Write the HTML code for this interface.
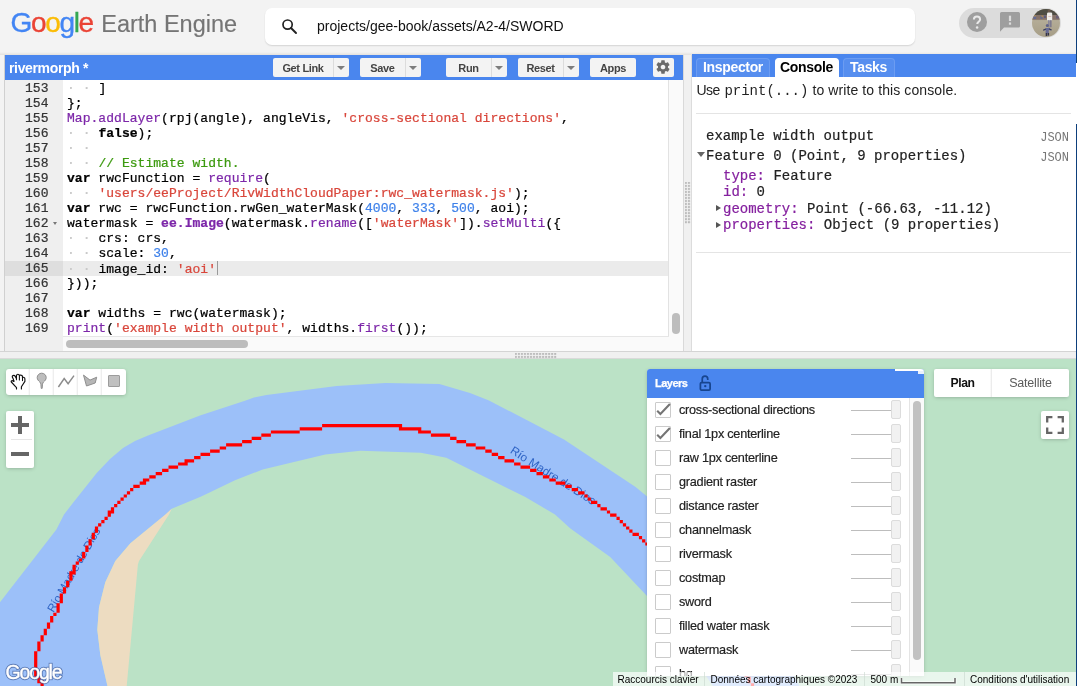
<!DOCTYPE html>
<html>
<head>
<meta charset="utf-8">
<title>Earth Engine Code Editor</title>
<style>
html,body{margin:0;padding:0;}
body{width:1077px;height:686px;overflow:hidden;position:relative;background:#f1f1f1;font-family:"Liberation Sans",sans-serif;font-size:13px;color:#212121;}
.abs{position:absolute;}
/* ---------- header ---------- */
#hdr{left:0;top:0;width:1077px;height:45px;background:#f3f3f3;}
#hdrline{display:none;}
#hdrgap{left:0;top:45px;width:1077px;height:11px;background:linear-gradient(#f3f3f3 0,#f3f3f3 7px,#e6e4e1 9.500px);}
#logo{left:10.500px;top:7px;height:32px;line-height:32px;font-size:28px;white-space:nowrap;letter-spacing:-1.350px;-webkit-text-stroke:0.350px;}
#logo .ee{color:#757575;font-size:23.500px;letter-spacing:0;margin-left:8.500px;-webkit-text-stroke:0.150px;}
#search{left:265px;top:8px;width:650px;height:37px;background:#fff;border-radius:7px;box-shadow:0 1px 1.500px rgba(0,0,0,.13);}
#search span{position:absolute;left:52px;top:0;line-height:36px;font-size:14px;color:#111;}
#pill{left:959px;top:8px;width:102px;height:30px;border-radius:15px;background:#dcdcdc;}
/* ---------- editor ---------- */
#lstrip{left:0;top:55px;width:5px;height:296px;background:#f3f3f3;border-right:1px solid #d0d0d0;box-sizing:border-box;}
#edbar{left:5px;top:55px;width:678px;height:25px;background:#4a86ee;}
#edbar .title{position:absolute;left:4px;top:0;line-height:26px;font-size:14px;font-weight:bold;color:#fff;letter-spacing:-0.35px;}
.btn{position:absolute;top:3px;height:19px;letter-spacing:-0.35px;background:#f3f3f3;border-radius:2px;color:#444;font-weight:bold;font-size:11px;line-height:20.300px;text-align:center;box-sizing:border-box;}
.btn .dd{position:absolute;right:0;top:0;width:16px;height:100%;border-left:1px solid #dcdcdc;box-sizing:border-box;}
.btn .dd:after{content:"";position:absolute;left:3px;top:7.5px;border:4.2px solid transparent;border-top:4.4px solid #7d7d7d;border-bottom:none;}
.btn .lb{position:absolute;left:0;top:0;bottom:0;}
#gutter{left:5px;top:80px;width:58px;height:271px;background:#efefef;}
#code{left:63px;top:80px;width:605px;height:256px;background:#fff;overflow:hidden;}
.ln,.cl{position:absolute;margin-top:0.7px;letter-spacing:0.04px;-webkit-text-stroke:0.22px;font-family:"Liberation Mono",monospace;font-size:13px;line-height:15px;height:15px;white-space:pre;}
.ln{left:0;width:43.5px;text-align:right;color:#333;}
.cl{left:4px;color:#000;}
.k{font-weight:bold;}
.p{color:#7d27a9;}
.s{color:#d9463b;}
.n{color:#3f82ea;}
.c{color:#3c9a0f;}
.d{color:#c8c8c8;}
#hl{left:5px;top:260.5px;width:664px;height:15px;background:#e8e8e8;}
#hl2{left:63px;top:260.5px;width:606px;height:15px;background:#ececec;}
#vsb{left:667.800px;top:80px;width:15.200px;height:271px;background:#fafafa;border-left:1px solid #e2e2e2;box-sizing:border-box;}
#vth{left:672px;top:313px;width:8px;height:21px;border-radius:4px;background:#bdbdbd;}
#hsb{left:63px;top:336px;width:606px;height:15px;background:#fafafa;border-top:1px solid #e6e6e6;box-sizing:border-box;}
#hth{left:66px;top:340px;width:182px;height:8px;border-radius:4px;background:#bdbdbd;}
#vsplit{left:683px;top:55px;width:9px;height:296px;background:#f0f0f0;border-left:1px solid #d9d9d9;border-right:1px solid #dcdcdc;box-sizing:border-box;}
.dots{position:absolute;background-image:radial-gradient(circle at 1px 1px,#b2b2b2 0.750px,rgba(178,178,178,0) 1.250px);background-size:3.020px 3.020px;}
/* ---------- right panel ---------- */
#rbar{left:692px;top:54px;width:385px;height:23px;background:#4a86ee;}
#rpanel{left:692px;top:77px;width:385px;height:273.5px;background:#fff;}
.tab{position:absolute;top:4px;height:19px;line-height:17px;font-size:14px;font-weight:bold;color:#fff;border:1px solid rgba(255,255,255,.13);border-bottom:none;border-radius:4px 4px 0 0;background:rgba(255,255,255,.07);text-align:center;box-sizing:border-box;letter-spacing:-0.35px;}
.tab.on{background:#fff;color:#000;border-color:#fff;}
.mono{font-family:"Liberation Mono",monospace;}
.cons{position:absolute;-webkit-text-stroke:0.2px;font-family:"Liberation Mono",monospace;font-size:14px;line-height:17px;white-space:pre;color:#222;}
.cons .p{color:#85219f;}
.json{position:absolute;font-family:"Liberation Mono",monospace;font-size:12px;color:#777;right:8px;}
.hr{position:absolute;height:1px;background:#e4e4e4;}
#hsplit{left:0;top:350.500px;width:1077px;height:8px;background:#f0f0f0;border-top:1px solid #d4d4d4;border-bottom:1px solid #dadada;box-sizing:border-box;}
/* ---------- map ---------- */
#map{left:0;top:358.5px;width:1077px;height:327.5px;background:#bbe2c6;overflow:hidden;}
</style>
</head>
<body>
<div id="root" style="position:absolute;left:0;top:0;width:1077px;height:686px;overflow:hidden;will-change:transform">
<!-- ================= HEADER ================= -->
<div id="hdr" class="abs"></div>
<div id="hdrline" class="abs"></div>
<div id="hdrgap" class="abs"></div>
<div id="logo" class="abs"><span style="color:#4285f4">G</span><span style="color:#ea4335">o</span><span style="color:#fbbc05">o</span><span style="color:#4285f4">g</span><span style="color:#34a853">l</span><span style="color:#ea4335">e</span><span class="ee">Earth Engine</span></div>
<div id="search" class="abs">
  <svg class="abs" style="left:16px;top:10px" width="17" height="17" viewBox="0 0 17 17"><circle cx="6.6" cy="6.6" r="4.6" fill="none" stroke="#222" stroke-width="1.7"/><path d="M10 10l5 5" stroke="#222" stroke-width="1.9" stroke-linecap="round"/></svg>
  <span>projects/gee-book/assets/A2-4/SWORD</span>
</div>
<div id="pill" class="abs"></div>
<!-- help -->
<svg class="abs" style="left:967px;top:12px" width="20" height="20" viewBox="0 0 20 20"><circle cx="10" cy="10" r="10" fill="#9e9e9e"/><path d="M6.9 7.6c0-1.8 1.3-3 3.1-3s3.1 1.1 3.1 2.8c0 2.2-2.9 2.5-2.9 4.7" fill="none" stroke="#e9e9e9" stroke-width="2"/><circle cx="10.1" cy="15.400" r="1.250" fill="#e9e9e9"/></svg>
<!-- feedback -->
<svg class="abs" style="left:1000px;top:12px" width="20" height="20.500" viewBox="0 0 20 20" preserveAspectRatio="none"><path d="M1.6 0h16.8c.9 0 1.6.7 1.6 1.600v12c0 .9-.7 1.600-1.600 1.600H4l-4 4V1.600C0 .7.7 0 1.600 0z" fill="#9e9e9e"/><rect x="8.900" y="3.600" width="2.200" height="5.200" fill="#dcdcdc"/><rect x="8.900" y="10.200" width="2.200" height="2.200" fill="#dcdcdc"/></svg>
<!-- avatar -->
<svg class="abs" style="left:1032px;top:8.800px" width="28" height="28" viewBox="0 0 28 28">
  <defs><clipPath id="av"><circle cx="14" cy="14" r="14"/></clipPath>
  <linearGradient id="avg" x1="0" y1="0" x2="0" y2="1"><stop offset="0" stop-color="#9a917b"/><stop offset=".45" stop-color="#b3ab96"/><stop offset="1" stop-color="#a59c84"/></linearGradient></defs>
  <g clip-path="url(#av)"><g>
    <rect x="-2" y="-2" width="32" height="32" fill="url(#avg)"/>
    <rect x="-2" y="-2" width="32" height="8.500" fill="#4f4d44"/>
    <rect x="-2" y="6" width="32" height="4.800" fill="#86736a"/>
    <rect x="1.500" y="7" width="2.600" height="3" fill="#5a689f" opacity=".8"/><rect x="2.200" y="6.400" width="1.600" height="1.200" fill="#c7983d" opacity=".75"/>
    <rect x="8.300" y="7" width="2.200" height="3" fill="#5d668f" opacity=".8"/><rect x="9.400" y="6.600" width="1.600" height="1.200" fill="#c7983d" opacity=".75"/>
    <rect x="12" y="6.500" width="2" height="2.500" fill="#5d5a7a"/>
    <rect x="24" y="6.500" width="3" height="3" fill="#6a5f76"/>
    <circle cx="17.100" cy="2" r="1.500" fill="#6b5a50"/>
    <rect x="15" y="3.600" width="5.200" height="7.800" rx="1.200" fill="#efedea"/>
    <rect x="16.300" y="7" width="3" height=".8" fill="#d9b5ae"/>
    <rect x="16" y="11.200" width="1.700" height="7.300" fill="#8a8699"/><rect x="18" y="11.200" width="1.600" height="7" fill="#7d7a8d"/>
    <circle cx="15.300" cy="16.600" r="1.500" fill="#5d6086"/>
    <path d="M11.400 20.800l2.800-1.700h2.400l2.800 1.500-.4 1-2.200-.6v3.200h-3.200v-3.200l-1.900.7z" fill="#666a94"/>
    <path d="M11 20.800l2.600-1.300.5.900-2.800 1.300zM19.800 20.600l-2.600-1.300-.5.900 2.700 1.400z" fill="#3a3c58"/>
    <rect x="13.700" y="24" width="1.500" height="3" fill="#33344a"/><rect x="15.600" y="24" width="1.500" height="2.600" fill="#33344a"/>
  </g></g>
</svg>
<div class="abs" style="left:1076px;top:0;width:1px;height:63px;background:#0d3f7c;z-index:5"></div><div class="abs" style="left:1076px;top:63px;width:1px;height:61px;background:#fff;z-index:5"></div>
<div class="abs" style="left:1076px;top:124px;width:1px;height:562px;background:#0d3f7c;z-index:5"></div>

<!-- ================= EDITOR ================= -->
<div id="lstrip" class="abs"></div>
<div id="edbar" class="abs">
  <span class="title">rivermorph *</span>
  <div class="btn" style="left:268px;width:76px"><span class="lb" style="right:16px">Get Link</span><span class="dd"></span></div>
  <div class="btn" style="left:355px;width:61px"><span class="lb" style="right:16px">Save</span><span class="dd"></span></div>
  <div class="btn" style="left:441px;width:61px"><span class="lb" style="right:16px">Run</span><span class="dd"></span></div>
  <div class="btn" style="left:513px;width:61px"><span class="lb" style="right:16px">Reset</span><span class="dd"></span></div>
  <div class="btn" style="left:585px;width:46px"><span class="lb" style="right:0">Apps</span></div>
  <div class="btn" style="left:648px;width:21px;top:3px;height:19px">
    <svg class="abs" style="left:2px;top:1px" width="16" height="16" viewBox="0 0 24 24"><path fill="#6a6a6a" d="M19.430 12.980c.040-.320.070-.640.070-.980s-.030-.660-.070-.980l2.110-1.650c.190-.150.240-.420.120-.640l-2-3.460c-.120-.220-.390-.300-.610-.220l-2.490 1c-.520-.400-1.080-.730-1.690-.980l-.380-2.650C14.460 2.180 14.250 2 14 2h-4c-.250 0-.460.180-.490.420l-.380 2.650c-.610.250-1.170.590-1.690.980l-2.490-1c-.230-.090-.490 0-.610.220l-2 3.460c-.130.220-.070.490.120.640l2.110 1.650c-.040.320-.070.650-.070.980s.030.660.070.980l-2.110 1.650c-.190.150-.240.420-.120.640l2 3.460c.120.220.390.300.610.220l2.490-1c.520.400 1.080.730 1.690.980l.380 2.650c.030.240.240.420.490.420h4c.250 0 .460-.180.490-.420l.380-2.650c.610-.250 1.170-.590 1.690-.980l2.490 1c.230.090.490 0 .610-.220l2-3.460c.120-.220.070-.490-.120-.640l-2.110-1.650zM12 15.500c-1.930 0-3.500-1.570-3.500-3.500s1.570-3.500 3.500-3.500 3.500 1.570 3.500 3.500-1.570 3.500-3.500 3.500z"/></svg>
  </div>
</div>
<div id="gutter" class="abs"></div>
<div id="hl" class="abs" style="width:58px;background:#dedede"></div>
<div id="code" class="abs">
<div class="abs" style="left:0;top:180.5px;width:606px;height:15px;background:#ebebeb"></div>
<div class="cl" style="top:0.5px"><span class="d">· · </span>]</div>
<div class="cl" style="top:15.5px">};</div>
<div class="cl" style="top:30.5px"><span class="p">Map.addLayer</span>(rpj(angle), angleVis, <span class="s">'cross-sectional directions'</span>,</div>
<div class="cl" style="top:45.5px"><span class="d">· · </span><span class="k">false</span>);</div>
<div class="cl" style="top:60.5px"><span class="d">· · </span></div>
<div class="cl" style="top:75.5px"><span class="d">· · </span><span class="c">// Estimate width.</span></div>
<div class="cl" style="top:90.5px"><span class="k">var</span> rwcFunction = <span class="p">require</span>(</div>
<div class="cl" style="top:105.5px"><span class="d">· · </span><span class="s">'users/eeProject/RivWidthCloudPaper:rwc_watermask.js'</span>);</div>
<div class="cl" style="top:120.5px"><span class="k">var</span> rwc = rwcFunction.rwGen_waterMask(<span class="n">4000</span>, <span class="n">333</span>, <span class="n">500</span>, aoi);</div>
<div class="cl" style="top:135.5px">watermask = <span class="p k">ee.Image</span>(watermask.<span class="p">rename</span>([<span class="s">'waterMask'</span>]).<span class="p">setMulti</span>({</div>
<div class="cl" style="top:150.5px"><span class="d">· · </span>crs: crs,</div>
<div class="cl" style="top:165.5px"><span class="d">· · </span>scale: <span class="n">30</span>,</div>
<div class="cl" style="top:180.5px"><span class="d">· · </span>image_id: <span class="s">'aoi'</span><span style="display:inline-block;width:1px;height:14px;background:#999;vertical-align:-2px;margin-left:1px"></span></div>
<div class="cl" style="top:195.5px">}));</div>
<div class="cl" style="top:210.5px"></div>
<div class="cl" style="top:225.5px"><span class="k">var</span> widths = rwc(watermask);</div>
<div class="cl" style="top:240.5px"><span class="p">print</span>(<span class="s">'example width output'</span>, widths.<span class="p">first</span>());</div>

</div>
<div id="gl" class="abs" style="left:5px;top:80px;width:58px;height:256px;overflow:hidden">
<div class="ln" style="top:0.5px">153</div>
<div class="ln" style="top:15.5px">154</div>
<div class="ln" style="top:30.5px">155</div>
<div class="ln" style="top:45.5px">156</div>
<div class="ln" style="top:60.5px">157</div>
<div class="ln" style="top:75.5px">158</div>
<div class="ln" style="top:90.5px">159</div>
<div class="ln" style="top:105.5px">160</div>
<div class="ln" style="top:120.5px">161</div>
<div class="ln" style="top:135.5px">162</div>
<div class="ln" style="top:150.5px">163</div>
<div class="ln" style="top:165.5px">164</div>
<div class="ln" style="top:180.5px">165</div>
<div class="ln" style="top:195.5px">166</div>
<div class="ln" style="top:210.5px">167</div>
<div class="ln" style="top:225.5px">168</div>
<div class="ln" style="top:240.5px">169</div>
<div class="abs" style="left:47.5px;top:141.5px;border:2.8px solid transparent;border-top:3.6px solid #777"></div>

</div>
<div id="vsb" class="abs"></div><div id="vth" class="abs"></div>
<div id="hsb" class="abs"></div><div id="hth" class="abs"></div>
<div id="vsplit" class="abs"></div>
<div class="dots" style="left:684.900px;top:181.800px;width:6px;height:42.200px"></div>

<!-- ================= RIGHT PANEL ================= -->
<div id="rbar" class="abs">
  <div class="tab" style="left:4px;width:74px">Inspector</div>
  <div class="tab on" style="left:82.5px;width:64px">Console</div>
  <div class="tab" style="left:150.5px;width:52px">Tasks</div>
</div>
<div id="rpanel" class="abs">
  <div class="abs" style="left:4.5px;top:4.500px;line-height:17px;font-size:14px;white-space:pre;color:#222;letter-spacing:0.1px"><span style="letter-spacing:-0.6px">Use</span><span style="display:inline-block;width:4.800px"></span><span class="mono" style="font-size:14px;letter-spacing:0">print(...)</span> to write to this console.</div>
  <div class="hr" style="left:4px;right:6px;top:35.7px"></div>
  <div class="cons" style="left:14px;top:51px">example width output</div>
  <div class="json" style="top:53.6px">JSON</div>
  <div class="cons" style="left:14px;top:70.6px">Feature 0 (Point, 9 properties)</div>
  <div class="json" style="top:73.6px">JSON</div>
  <div class="abs" style="left:5px;top:74.6px;border:4px solid transparent;border-top:5px solid #666"></div>
  <div class="cons" style="left:31px;top:90.6px"><span class="p">type:</span> Feature</div>
  <div class="cons" style="left:31px;top:107.1px"><span class="p">id:</span> 0</div>
  <div class="cons" style="left:31px;top:123.6px"><span class="p">geometry:</span> Point (-66.63, -11.12)</div>
  <div class="cons" style="left:31px;top:140.1px"><span class="p">properties:</span> Object (9 properties)</div>
  <div class="abs" style="left:24px;top:128.1px;border:3px solid transparent;border-left:5px solid #555"></div>
  <div class="abs" style="left:24px;top:144.6px;border:3px solid transparent;border-left:5px solid #555"></div>
  <div class="hr" style="left:4px;right:6px;top:174.5px"></div>
</div>
<div id="hsplit" class="abs"></div>
<div class="dots" style="left:515.100px;top:352.900px;width:42.200px;height:6px"></div>

<!-- ================= MAP ================= -->
<div id="map" class="abs">
<svg class="abs" style="left:0;top:0" width="1077" height="328" viewBox="0 0 1077 328">
  <polygon points="-5.0,249.5 0.0,243.2 56.4,170.5 64.0,155.5 72.7,144.3 96.5,114.2 110.0,100.0 123.0,89.1 135.0,82.1 148.0,76.5 200.0,56.5 245.7,41.5 254.0,38.5 266.4,36.0 336.6,27.0 385.5,24.0 439.4,25.0 470.0,34.0 489.0,41.5 564.0,80.4 635.6,128.0 646.8,137.3 690.0,176.5 745.0,241.5 790.0,309.5 803.0,333.5 716.0,331.5 709.0,321.5 690.0,291.5 647.0,237.0 610.2,198.1 570.4,169.4 555.0,155.5 525.3,138.0 446.3,98.7 430.0,95.5 420.6,93.7 360.4,91.7 325.3,95.5 262.7,110.5 235.0,121.3 208.0,134.3 200.0,138.1 171.7,149.8 165.5,155.5 130.4,184.3 115.3,201.9 105.3,223.2 99.0,248.3 97.3,270.8 100.3,295.9 108.5,331.5 -5.0,331.5" fill="#9cc0f9"/>
  <polygon points="171.7,149.8 169.0,155.5 139.0,201.9 137.9,205.5 126.3,331.5 108.5,331.5 100.3,295.9 97.3,270.8 99.0,248.3 105.3,223.2 115.3,201.9 130.4,184.3 165.5,155.5" fill="#eddcc1"/>
  <text transform="translate(509.4,93.6) rotate(32.3)" font-family="Liberation Sans, sans-serif" font-size="11.800" fill="#2e63c5">Río Madre de Dios</text>
  <text transform="translate(53.4,254) rotate(-60)" font-family="Liberation Sans, sans-serif" font-size="11.400" fill="#2e63c5">Río Madre de Dios</text>
  <path d="M40.5 324.2h3.2v3.2h-3.2zM750.9 324.2h3.2v3.2h-3.2zM37.3 321.0h6.4v3.2h-6.4zM747.7 321.0h3.2v3.2h-3.2zM37.3 317.8h3.2v3.2h-3.2zM747.7 317.8h3.2v3.2h-3.2zM34.1 314.6h3.2v3.2h-3.2zM744.5 314.6h3.2v3.2h-3.2zM34.1 311.4h3.2v3.2h-3.2zM741.3 311.4h3.2v3.2h-3.2zM34.1 308.2h3.2v3.2h-3.2zM738.1 308.2h3.2v3.2h-3.2zM34.1 305.0h3.2v3.2h-3.2zM738.1 305.0h3.2v3.2h-3.2zM34.1 301.8h3.2v3.2h-3.2zM734.9 301.8h3.2v3.2h-3.2zM34.1 298.6h3.2v3.2h-3.2zM731.7 298.6h3.2v3.2h-3.2zM34.1 295.4h3.2v3.2h-3.2zM731.7 295.4h3.2v3.2h-3.2zM34.1 292.2h3.2v3.2h-3.2zM728.5 292.2h3.2v3.2h-3.2zM37.3 289.0h3.2v3.2h-3.2zM725.3 289.0h3.2v3.2h-3.2zM37.3 285.8h3.2v3.2h-3.2zM722.1 285.8h6.4v3.2h-6.4zM37.3 282.6h3.2v3.2h-3.2zM722.1 282.6h3.2v3.2h-3.2zM40.5 279.4h3.2v3.2h-3.2zM718.9 279.4h3.2v3.2h-3.2zM40.5 276.2h3.2v3.2h-3.2zM715.7 276.2h3.2v3.2h-3.2zM43.7 273.0h3.2v3.2h-3.2zM715.7 273.0h3.2v3.2h-3.2zM43.7 269.8h3.2v3.2h-3.2zM712.5 269.8h3.2v3.2h-3.2zM46.9 266.6h3.2v3.2h-3.2zM709.3 266.6h3.2v3.2h-3.2zM46.9 263.4h3.2v3.2h-3.2zM709.3 263.4h3.2v3.2h-3.2zM50.1 260.2h3.2v3.2h-3.2zM706.1 260.2h3.2v3.2h-3.2zM50.1 257.0h3.2v3.2h-3.2zM702.9 257.0h3.2v3.2h-3.2zM53.3 253.8h3.2v3.2h-3.2zM699.7 253.8h3.2v3.2h-3.2zM56.5 250.6h3.2v3.2h-3.2zM699.7 250.6h3.2v3.2h-3.2zM56.5 247.4h3.2v3.2h-3.2zM696.5 247.4h3.2v3.2h-3.2zM56.5 244.2h3.2v3.2h-3.2zM693.3 244.2h3.2v3.2h-3.2zM59.7 241.0h3.2v3.2h-3.2zM690.1 241.0h3.2v3.2h-3.2zM59.7 237.8h3.2v3.2h-3.2zM690.1 237.8h3.2v3.2h-3.2zM59.7 234.6h3.2v3.2h-3.2zM686.9 234.6h3.2v3.2h-3.2zM62.9 231.4h3.2v3.2h-3.2zM683.7 231.4h3.2v3.2h-3.2zM62.9 228.2h3.2v3.2h-3.2zM680.5 228.2h3.2v3.2h-3.2zM66.1 225.0h3.2v3.2h-3.2zM677.3 225.0h3.2v3.2h-3.2zM66.1 221.8h3.2v3.2h-3.2zM677.3 221.8h3.2v3.2h-3.2zM69.3 218.6h3.2v3.2h-3.2zM674.1 218.6h3.2v3.2h-3.2zM69.3 215.4h3.2v3.2h-3.2zM670.9 215.4h3.2v3.2h-3.2zM69.3 212.2h6.4v3.2h-6.4zM667.7 212.2h3.2v3.2h-3.2zM72.5 209.0h3.2v3.2h-3.2zM664.5 209.0h3.2v3.2h-3.2zM72.5 205.8h3.2v3.2h-3.2zM664.5 205.8h3.2v3.2h-3.2zM75.7 202.6h3.2v3.2h-3.2zM661.3 202.6h3.2v3.2h-3.2zM78.9 199.4h3.2v3.2h-3.2zM658.1 199.4h3.2v3.2h-3.2zM82.1 196.2h3.2v3.2h-3.2zM654.9 196.2h3.2v3.2h-3.2zM82.1 193.0h3.2v3.2h-3.2zM651.7 193.0h3.2v3.2h-3.2zM85.3 189.8h3.2v3.2h-3.2zM651.7 189.8h3.2v3.2h-3.2zM85.3 186.6h3.2v3.2h-3.2zM648.5 186.6h3.2v3.2h-3.2zM88.5 183.4h3.2v3.2h-3.2zM645.3 183.4h3.2v3.2h-3.2zM88.5 180.2h3.2v3.2h-3.2zM642.1 180.2h3.2v3.2h-3.2zM91.7 177.0h3.2v3.2h-3.2zM638.9 177.0h3.2v3.2h-3.2zM91.7 173.8h3.2v3.2h-3.2zM632.5 173.8h6.4v3.2h-6.4zM94.9 170.6h3.2v3.2h-3.2zM629.3 170.6h3.2v3.2h-3.2zM94.9 167.4h3.2v3.2h-3.2zM626.1 167.4h3.2v3.2h-3.2zM98.1 164.2h3.2v3.2h-3.2zM622.9 164.2h3.2v3.2h-3.2zM101.3 161.0h3.2v3.2h-3.2zM619.7 161.0h3.2v3.2h-3.2zM104.5 157.8h3.2v3.2h-3.2zM616.5 157.8h3.2v3.2h-3.2zM107.7 154.6h3.2v3.2h-3.2zM610.1 154.6h6.4v3.2h-6.4zM107.7 151.4h6.4v3.2h-6.4zM606.9 151.4h3.2v3.2h-3.2zM110.9 148.2h3.2v3.2h-3.2zM600.5 148.2h6.4v3.2h-6.4zM114.1 145.0h3.2v3.2h-3.2zM597.3 145.0h3.2v3.2h-3.2zM117.3 141.8h3.2v3.2h-3.2zM590.9 141.8h6.4v3.2h-6.4zM120.5 138.6h3.2v3.2h-3.2zM587.7 138.6h3.2v3.2h-3.2zM123.7 135.4h3.2v3.2h-3.2zM584.5 135.4h3.2v3.2h-3.2zM126.9 132.2h3.2v3.2h-3.2zM578.1 132.2h6.4v3.2h-6.4zM130.1 129.0h3.2v3.2h-3.2zM571.7 129.0h6.4v3.2h-6.4zM133.3 125.8h6.4v3.2h-6.4zM565.3 125.8h6.4v3.2h-6.4zM139.7 122.6h6.4v3.2h-6.4zM555.7 122.6h9.6v3.2h-9.6zM142.9 119.4h6.4v3.2h-6.4zM549.3 119.4h6.4v3.2h-6.4zM149.3 116.2h6.4v3.2h-6.4zM542.9 116.2h6.4v3.2h-6.4zM155.7 113.0h6.4v3.2h-6.4zM536.5 113.0h6.4v3.2h-6.4zM162.1 109.8h6.4v3.2h-6.4zM530.1 109.8h6.4v3.2h-6.4zM168.5 106.6h9.6v3.2h-9.6zM520.5 106.6h9.6v3.2h-9.6zM178.1 103.4h9.6v3.2h-9.6zM514.1 103.4h6.4v3.2h-6.4zM184.5 100.2h9.6v3.2h-9.6zM504.5 100.2h9.6v3.2h-9.6zM194.1 97.0h6.4v3.2h-6.4zM498.1 97.0h6.4v3.2h-6.4zM200.5 93.8h9.6v3.2h-9.6zM491.7 93.8h6.4v3.2h-6.4zM210.1 90.6h9.6v3.2h-9.6zM485.3 90.6h6.4v3.2h-6.4zM219.7 87.4h6.4v3.2h-6.4zM475.7 87.4h9.6v3.2h-9.6zM226.1 84.2h16.0v3.2h-16.0zM466.1 84.2h9.6v3.2h-9.6zM242.1 81.0h9.6v3.2h-9.6zM456.5 81.0h9.6v3.2h-9.6zM251.7 77.8h9.6v3.2h-9.6zM450.1 77.8h6.4v3.2h-6.4zM261.3 74.6h9.6v3.2h-9.6zM430.9 74.6h19.2v3.2h-19.2zM270.9 71.4h28.8v3.2h-28.8zM418.1 71.4h12.8v3.2h-12.8zM299.7 68.2h22.4v3.2h-22.4zM398.9 68.2h22.4v3.2h-22.4zM322.1 65.0h80.0v3.2h-80.0zM754.1 327.4h3.2v3.2h-3.2z" fill="#ff0000"/>
</svg>
<style>
.mbox{position:absolute;background:#fff;border-radius:2px;box-shadow:0 1px 4px -1px rgba(0,0,0,.3);}
.rlab{position:absolute;font-size:11.800px;color:#2e63c5;white-space:pre;transform-origin:0 50%;line-height:12px;}
.lrow{position:absolute;left:0;width:262px;height:24px;}
.lrow .cb{position:absolute;left:8px;top:4px;width:16px;height:16px;box-sizing:border-box;border:1.200px solid #cbcbcb;background:#fff;border-radius:1px;}
.lrow .lb{position:absolute;left:32px;top:0;line-height:24px;font-size:12.700px;color:#222;letter-spacing:-0.25px;-webkit-text-stroke:.18px;white-space:nowrap;}
.lrow .tr{position:absolute;left:204px;top:12px;width:41px;height:1px;background:#bdbdbd;}
.lrow .th{position:absolute;left:244px;top:2.500px;width:10px;height:19px;box-sizing:border-box;border:1px solid #dcdcdc;background:#f1f1f1;border-radius:2px;}
.att{position:absolute;top:313.500px;height:14px;line-height:16.500px;overflow:hidden;font-size:10px;color:#000;background:rgba(255,255,255,.68);white-space:nowrap;box-sizing:border-box;}
</style>
<!-- drawing tools -->
<div class="mbox" style="left:6px;top:10.500px;width:120px;height:26px;border-radius:3px">
  <div class="abs" style="left:21.5px;top:0;width:2.5px;height:26px;background:linear-gradient(90deg,rgba(0,0,0,0),rgba(0,0,0,.09))"></div>
  <div class="abs" style="left:45.5px;top:0;width:2.5px;height:26px;background:linear-gradient(90deg,rgba(0,0,0,0),rgba(0,0,0,.09))"></div>
  <div class="abs" style="left:69.5px;top:0;width:2.5px;height:26px;background:linear-gradient(90deg,rgba(0,0,0,0),rgba(0,0,0,.09))"></div>
  <div class="abs" style="left:93.5px;top:0;width:2.5px;height:26px;background:linear-gradient(90deg,rgba(0,0,0,0),rgba(0,0,0,.09))"></div>
  <!-- hand -->
  <svg class="abs" style="left:4px;top:4px" width="17" height="17" viewBox="0 0 17 17"><path d="M6.500 15.900V14.600L1.300 9C.8 8.300 1.600 7.500 2.500 7.700L3.600 8.300 3.400 6.300 2.300 4C2.100 2.900 3 2.300 3.800 2.300 4.600 2.300 5 2.800 5.300 3.400L6.450 5.600V2.700C6.600 1.700 7.200 1.250 7.900 1.250 8.700 1.250 9.300 1.700 9.400 2.600 9.600 2.200 10.200 2 10.900 2.100 11.800 2.200 12.400 2.800 12.500 3.600V4.600C12.800 4.300 13.400 4.200 14 4.500 14.600 4.800 14.900 5.300 14.900 5.900V8.400L11.400 13.800V15.900" fill="#fff" stroke="#111" stroke-width="1.150" stroke-linejoin="round" stroke-linecap="round"/><path d="M6.450 2.900V6.700M9.400 2.700V6.900M12.500 3.900V7.600" stroke="#111" stroke-width="1.050" fill="none" stroke-linecap="round"/><path d="M2.500 7.600 4.300 6.900 4.500 8.900 3.300 9z" fill="#111"/></svg>
  <!-- marker -->
  <svg class="abs" style="left:29px;top:3px" width="14" height="18" viewBox="0 0 14 18"><path d="M6.700 1.200c-2.600 0-4.500 2-4.500 4.400 0 1.900 1.300 3.200 2.600 4.400.6.600 1 1.200 1.100 2.200l.35 4.200h.9l.35-4.200c.1-1 .5-1.600 1.100-2.200 1.300-1.200 2.600-2.500 2.600-4.400 0-2.400-1.900-4.400-4.500-4.400z" fill="#bdbdbd" stroke="#8e8e8e" stroke-width="1"/></svg>
  <!-- polyline -->
  <svg class="abs" style="left:50px;top:3px" width="22" height="20" viewBox="0 0 22 20"><path d="M2.400 15 8.200 6.500l3.900 5.200L18 3.600" fill="none" stroke="#8c8c8c" stroke-width="1.450"/></svg>
  <!-- polygon -->
  <svg class="abs" style="left:74px;top:4.400px" width="22" height="20" viewBox="0 0 22 20"><path d="M3.500 2.100 10 7.100l6.700-2.900-1.500 5.800-8.700 3z" fill="#b6b6b6" stroke="#8f8f8f" stroke-width="1"/></svg>
  <!-- rectangle -->
  <div class="abs" style="left:102px;top:5.500px;width:12px;height:12px;box-sizing:border-box;background:#c0c0c0;border:1.200px solid #9c9c9c;border-radius:1px"></div>
</div>

<!-- zoom -->
<div class="mbox" style="left:6px;top:52.500px;width:28px;height:57px">
  <div class="abs" style="left:5px;top:12.250px;width:18px;height:3.500px;background:#666"></div>
  <div class="abs" style="left:12.250px;top:5px;width:3.500px;height:18px;background:#666"></div>
  <div class="abs" style="left:5px;top:27.600px;width:21px;height:1px;background:#e6e6e6"></div>
  <div class="abs" style="left:5px;top:41.250px;width:18px;height:3.500px;background:#666"></div>
</div>

<!-- Google logo -->
<div class="abs" style="left:5.500px;top:301.500px;font-size:19.5px;line-height:24px;color:#fff;letter-spacing:-1.15px;-webkit-text-stroke:2.300px rgba(70,100,160,.72)">Google</div>
<div class="abs" style="left:5.500px;top:301.500px;font-size:19.5px;line-height:24px;color:#fff;letter-spacing:-1.15px;-webkit-text-stroke:.35px #fff">Google</div>

<!-- layers panel -->
<div class="abs" style="left:647px;top:10.500px;width:277px;height:307px;background:#fff;border-radius:3px 3px 0 0;box-shadow:0 1px 4px -1px rgba(0,0,0,.3);overflow:hidden">
  <div class="abs" style="left:0;top:0;width:277px;height:28.500px;background:#4a86ee"></div>
  <div class="abs" style="left:248px;top:0;width:29px;height:2px;background:#fff"></div>
  <div class="abs" style="left:271px;top:2px;width:6px;height:2.500px;background:#e9f0fd"></div>
  <div class="abs" style="left:8px;top:0;line-height:29px;font-size:11px;font-weight:bold;color:#fff;letter-spacing:-0.5px;-webkit-text-stroke:.25px #fff">Layers</div>
  <svg class="abs" style="left:51.800px;top:5.500px" width="13" height="17" viewBox="0 0 13 17"><rect x="1.400" y="7.700" width="9.700" height="7.400" rx="1.100" fill="none" stroke="#17458f" stroke-width="1.750"/><path d="M3.250 7.500V3.900a2.750 2.750 0 0 1 5.500 0v1" fill="none" stroke="#17458f" stroke-width="1.700"/><circle cx="6.250" cy="11.100" r="1.200" fill="#17458f"/></svg>
  <div class="lrow" style="top:28.5px"><div class="cb"><svg style="position:absolute;left:-1px;top:-1px" width="16" height="16" viewBox="0 0 16 16"><path d="M2.2 8.7 5.4 12 14.9 2" fill="none" stroke="#757575" stroke-width="2.1"/></svg></div><span class="lb">cross-sectional directions</span><div class="tr"></div><div class="th"></div></div>
<div class="lrow" style="top:52.5px"><div class="cb"><svg style="position:absolute;left:-1px;top:-1px" width="16" height="16" viewBox="0 0 16 16"><path d="M2.2 8.7 5.4 12 14.9 2" fill="none" stroke="#757575" stroke-width="2.1"/></svg></div><span class="lb">final 1px centerline</span><div class="tr"></div><div class="th"></div></div>
<div class="lrow" style="top:76.5px"><div class="cb"></div><span class="lb">raw 1px centerline</span><div class="tr"></div><div class="th"></div></div>
<div class="lrow" style="top:100.5px"><div class="cb"></div><span class="lb">gradient raster</span><div class="tr"></div><div class="th"></div></div>
<div class="lrow" style="top:124.5px"><div class="cb"></div><span class="lb">distance raster</span><div class="tr"></div><div class="th"></div></div>
<div class="lrow" style="top:148.5px"><div class="cb"></div><span class="lb">channelmask</span><div class="tr"></div><div class="th"></div></div>
<div class="lrow" style="top:172.5px"><div class="cb"></div><span class="lb">rivermask</span><div class="tr"></div><div class="th"></div></div>
<div class="lrow" style="top:196.5px"><div class="cb"></div><span class="lb">costmap</span><div class="tr"></div><div class="th"></div></div>
<div class="lrow" style="top:220.5px"><div class="cb"></div><span class="lb">sword</span><div class="tr"></div><div class="th"></div></div>
<div class="lrow" style="top:244.5px"><div class="cb"></div><span class="lb">filled water mask</span><div class="tr"></div><div class="th"></div></div>
<div class="lrow" style="top:268.5px"><div class="cb"></div><span class="lb">watermask</span><div class="tr"></div><div class="th"></div></div>
<div class="lrow" style="top:292.5px"><div class="cb"></div><span class="lb">bg</span><div class="tr"></div><div class="th"></div></div>

  <div class="abs" style="left:262px;top:28.500px;width:15px;height:279px;background:#fafafa;border-left:1px solid #e4e4e4;box-sizing:border-box"></div>
  <div class="abs" style="left:265.800px;top:32px;width:8px;height:259px;border-radius:4px;background:#c1c1c1"></div>
</div>

<!-- map type -->
<div class="mbox" style="left:934px;top:10.500px;width:135px;height:28px">
  <div class="abs" style="left:0;top:0;width:57px;line-height:28px;text-align:center;font-size:12.200px;font-weight:bold;color:#111;letter-spacing:-0.45px">Plan</div>
  <div class="abs" style="left:56px;top:0;width:2px;height:28px;background:linear-gradient(90deg,rgba(0,0,0,0),rgba(0,0,0,.1))"></div>
  <div class="abs" style="left:58px;top:0;width:77px;line-height:28px;text-align:center;font-size:12.500px;color:#5b5b5b;letter-spacing:-0.2px">Satellite</div>
</div>
<!-- fullscreen -->
<div class="mbox" style="left:1041px;top:52.500px;width:28px;height:28px">
  <svg class="abs" style="left:5px;top:5px" width="18" height="18" viewBox="0 0 18 18"><path d="M1.200 6.400V1.200h5.200M11.600 1.200h5.200v5.200M16.800 11.600v5.200h-5.200M6.400 16.800H1.200v-5.200" fill="none" stroke="#666" stroke-width="2.300"/></svg>
</div>

<!-- attribution -->
<div class="att" style="left:612.500px;width:91.500px;padding-left:5px">Raccourcis clavier</div>
<div class="att" style="left:704px;width:160px;padding-left:5.500px;border-left:1px solid rgba(200,215,205,.6)">Données cartographiques ©2023</div>
<div class="att" style="left:864px;width:100px;padding-left:5.500px;border-left:1px solid rgba(200,215,205,.6)">500 m</div>
<svg class="abs" style="left:900px;top:318px" width="57" height="8" viewBox="0 0 57 8"><path d="M1.500 1v4.800h53.500V1" fill="none" stroke="#fff" stroke-width="3" opacity=".7"/><path d="M1.500 1v4.800h53.500V1" fill="none" stroke="#666" stroke-width="1.500"/></svg>
<div class="att" style="left:964px;width:113px;padding-left:5px;border-left:1px solid rgba(200,215,205,.6)">Conditions d'utilisation</div>

</div>
</div>
</body>
</html>
